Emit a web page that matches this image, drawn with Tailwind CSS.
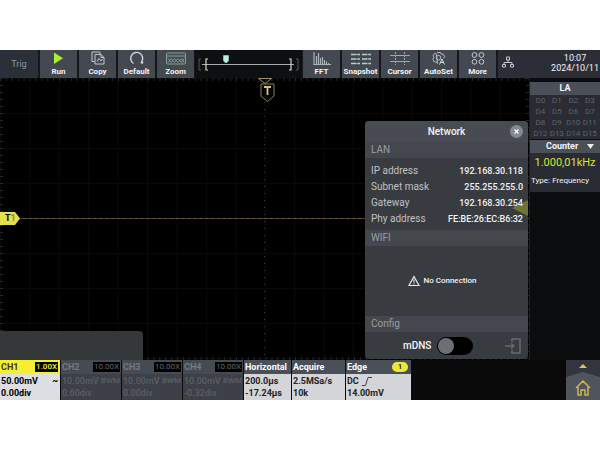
<!DOCTYPE html>
<html lang="en">
<head>
  <meta charset="utf-8">
  <meta name="viewport" content="width=device-width, initial-scale=1">
  <title>Oscilloscope</title>
  <script src="https://cdn.jsdelivr.net/npm/@tailwindcss/browser@4"></script>
</head>
<body class="min-h-screen bg-white flex flex-col justify-center font-['Roboto',sans-serif] text-[9px] leading-3 text-gray-100">
  <main class="w-full bg-black overflow-hidden">

    <!-- toolbar -->
    <header class="h-7 grid grid-cols-[39fr_39fr_39fr_39fr_39fr_107fr_39fr_39fr_39fr_39fr_39fr_103fr] bg-[#15171a] text-[8px] leading-[9px] font-bold">
      <button class="mr-px bg-[#2b2f37] text-[9px] font-normal text-[#8b9a98]">Trig</button>
      <button class="mx-px bg-[#434851] flex flex-col items-center pt-px">
        <svg class="w-4 h-4" viewBox="0 0 16 16"><path d="M3 1.500 L12 7.200 L3 13 Z" fill="#a8f02c"/></svg>
        Run
      </button>
      <button class="mx-px bg-[#434851] flex flex-col items-center pt-px">
        <svg class="w-4 h-4" viewBox="0 0 16 16" fill="none" stroke="#c3c8cb" stroke-width="1"><path d="M4.500 10.500H2V1h8v2"/><path d="M5 3.500h6l3 3v6.500H5z"/><path d="M11 3.500v3h3M7 10.500l2-3 2 2.500 1.500-2"/></svg>
        Copy
      </button>
      <button class="mx-px bg-[#434851] flex flex-col items-center pt-px">
        <svg class="w-4 h-4" viewBox="0 0 16 16" fill="none" stroke="#d5d8da" stroke-width="1.400"><path d="M4.500 12.500A6 6 0 1 1 12.500 11"/><circle cx="13" cy="11.500" r="1.300" fill="#d5d8da" stroke="none"/></svg>
        Default
      </button>
      <button class="mx-px bg-[#434851] flex flex-col items-center pt-px">
        <svg class="w-5 h-4" viewBox="0 0 20 16" fill="none" stroke="#84a397" stroke-width="1"><rect x=".5" y="2" width="19" height="11" rx="1"/><path d="M1 5h18"/><path d="M2 7.500l3 4 3.500-4 3.500 4 3.500-4 2.500 4M2 11.500l3-4 3.500 4 3.500-4 3.500 4 2.500-4" stroke-width=".9"/></svg>
        Zoom
      </button>
      <div class="bg-[#0e0f10] px-[3px]">
        <svg class="w-full h-7" viewBox="0 0 101 28" fill="none" stroke="#a9adad"><path d="M3 9H1v11h2M98 9h2v11h-2" stroke="#55585a"/><path d="M4 14.500h92"/><path d="M10 9H8v11h2M91 9h2v11h-2" stroke="#d0d3d3" stroke-width="1.200"/><path d="M25.500 5.500h5v5l-1.500 2h-2l-1.500-2z" fill="#b9eee2" stroke="#b9eee2" stroke-width=".5"/></svg>
      </div>
      <button class="mx-px bg-[#434851] flex flex-col items-center pt-px">
        <svg class="w-5 h-4" viewBox="0 0 20 16" fill="none" stroke="#aab3b5" stroke-width="1.200"><path d="M2 1v12.500h17"/><path d="M4.500 13V5M6.500 13V2M8.500 13V7M10.500 13V6M12.500 13V9M14.500 13v-2.500M16.500 13v-1"/></svg>
        FFT
      </button>
      <button class="mx-px bg-[#434851] flex flex-col items-center pt-px">
        <svg class="w-5 h-4" viewBox="0 0 20 16" fill="none" stroke="#b5cfc9" stroke-width="1.300"><path d="M0 3.500h9M11 3.500h9M0 8h9M11 8h9M0 12.500h9M11 12.500h9" stroke-dasharray="5.500 .7"/></svg>
        Snapshot
      </button>
      <button class="mx-px bg-[#434851] flex flex-col items-center pt-px">
        <svg class="w-5 h-4" viewBox="0 0 20 16" fill="none" stroke="#8db0a2"><path d="M0 4.500h20M0 10.500h20"/><path d="M5.500 1v13M14.500 1v13" stroke-dasharray="2 1"/></svg>
        Cursor
      </button>
      <button class="mx-px bg-[#434851] flex flex-col items-center pt-px">
        <svg class="w-4 h-4" viewBox="0 0 16 16" fill="none" stroke="#b4bfc1"><path d="M6 1.500h3.500l.7 1.700 1.900-.2 1.500 2.700-1.100 1.600M6.500 12.500l-.9-1.600-2.200.2-1.700-2.800 1.300-1.700L2 4.800l1.500-2.300 1.900.4z"/><circle cx="7.500" cy="6.700" r="2.300"/><path d="M8.500 13.500l2.500-5.500 2.500 5.500M9.500 11.500h3" stroke="#c9e6df"/></svg>
        AutoSet
      </button>
      <button class="mx-px bg-[#434851] flex flex-col items-center pt-px">
        <svg class="w-4 h-4" viewBox="0 0 16 16" fill="none" stroke="#c3c8ca"><circle cx="4.500" cy="4" r="2.400"/><circle cx="11.500" cy="4" r="2.400"/><circle cx="4.500" cy="10.800" r="2.400"/><circle cx="11.500" cy="10.800" r="2.400"/></svg>
        More
      </button>
      <div class="ml-px pl-1 pr-px bg-[#2b2e36] flex items-start justify-between font-normal text-[9px] leading-[10px]">
        <svg class="w-3 h-3 mt-[6px]" viewBox="0 0 12 12" fill="none" stroke="#c3c8ca"><path d="M4.500 1h3v3h-3zM.5 8.500h3v2.500h-3zM8.500 8.500h3v2.500h-3zM6 4v2.500M2 8.500v-2h8v2"/></svg>
        <div class="flex flex-col items-center pt-[3px]"><span>10:07</span><span>2024/10/11</span></div>
      </div>
    </header>

    <div class="relative flex h-[282px]">
      <!-- waveform area -->
      <section class="relative flex-1 min-w-0">
        <svg class="w-full h-full" viewBox="0 0 529 282" preserveAspectRatio="none" fill="none">
          <defs>
            <pattern id="grid" width="29.400" height="35" patternUnits="userSpaceOnUse"><path d="M.5 0v35M0 .5h29.400" stroke="#080909"/></pattern>
          </defs>
          <rect width="529" height="282" fill="url(#grid)"/>
          <path d="M0 1.500h529M0 280.500h529" stroke="#242727" stroke-width="3" stroke-dasharray="1 4.900"/>
          <path d="M1.500 0v282M527.500 0v282" stroke="#242727" stroke-width="3" stroke-dasharray="1 6"/>
          <path d="M264.500 24v258" stroke="#3b3b34" stroke-dasharray="1 6"/>
          <path d="M0 140.500h529" stroke="#4a3e2a"/>
          <path d="M0 140.500h529" stroke="#75623f" stroke-dasharray="2 3.880"/>
        </svg>
        <!-- trigger position -->
        <svg class="absolute left-1/2 -ml-2 top-0 w-5 h-6" viewBox="0 0 20 24" fill="none" stroke="#a28d5c"><path d="M1.500.5h13l-6.500 5z"/><path d="M4 6h13v12l-6.500 5.500L4 18z" stroke="#8a805f"/><path d="M7 9h7M10.500 9v8" stroke="#dcc377" stroke-width="1.800"/></svg>
        <!-- CH1 level -->
        <div class="absolute left-0 top-[134px] w-5 h-[13px] pl-[5px] bg-[#e6df4c] text-[9px] leading-[13px] font-bold text-black [clip-path:polygon(0_0,75%_0,100%_50%,75%_100%,0_100%)]">T<span class="text-[#8f8a30]">1</span></div>
        <div class="absolute left-0 bottom-0 w-[143px] h-[29px] rounded-tr bg-[#35383a]"></div>
      </section>

      <!-- side panel -->
      <aside class="w-[71px] ml-auto pt-1 bg-[#0b0c0d] border-l border-[#1d1f22]">
        <div class="bg-[#292c33]">
          <h2 class="h-[13px] bg-[#4a4f58] text-center leading-[13px] font-bold">LA</h2>
          <div class="grid grid-cols-4 px-[2px] text-center text-[8px] leading-[11px] text-[#5d626a]">
            <span>D0</span><span>D1</span><span>D2</span><span>D3</span>
            <span>D4</span><span>D5</span><span>D6</span><span>D7</span>
            <span>D8</span><span>D9</span><span>D10</span><span>D11</span>
            <span>D12</span><span>D13</span><span>D14</span><span>D15</span>
          </div>
        </div>
        <div class="mt-px bg-[#292c33] pb-1">
          <button class="w-full h-[13px] pl-4 pr-[6px] bg-[#4a4f58] flex items-center justify-between leading-[13px] font-bold">
            Counter
            <svg class="w-[7px] h-[5px]" viewBox="0 0 7 5"><path d="M0 0h7L3.500 5z" fill="#eee"/></svg>
          </button>
          <p class="text-center text-[11px] leading-5 text-[#d9e12f]">1.000,01kHz</p>
          <p class="flex justify-between pl-px pr-[11px] pt-px text-[8px] leading-[14px]"><span>Type:</span><span>Frequency</span></p>
        </div>
      </aside>

      <!-- network dialog -->
      <section role="dialog" aria-labelledby="network-title" class="absolute right-[72px] top-[43px] w-[163px] rounded bg-[#383b40] overflow-hidden text-[10px]">
        <!-- trigger level marker, seen through the dialog -->
        <div class="absolute right-0 top-[79px] w-4 h-4 bg-[#6f7538] [clip-path:polygon(0_50%,100%_0,100%_100%)]"></div>
        <div class="relative h-[21px] bg-[#484c52]">
          <h2 id="network-title" class="text-center leading-[21px] font-medium">Network</h2>
          <button aria-label="Close" class="absolute right-[5px] top-1 w-[13px] h-[13px] rounded-full bg-[#858a92] flex items-center justify-center">
            <svg class="w-[5px] h-[5px]" viewBox="0 0 5 5" stroke="#fff" stroke-width="1.300"><path d="M.5.5l4 4M4.500.5l-4 4"/></svg>
          </button>
        </div>
        <h3 class="h-4 pl-[6px] bg-[#44474e] leading-4 text-[#9a9da1]">LAN</h3>
        <dl class="relative grid grid-cols-[auto_auto] justify-between pl-[6px] pr-[5px] pt-[5px] pb-[3px] leading-4">
          <dt class="text-[#c0c2c4]">IP address</dt><dd class="text-right text-[9px] font-medium">192.168.30.118</dd>
          <dt class="text-[#c0c2c4]">Subnet mask</dt><dd class="text-right text-[9px] font-medium">255.255.255.0</dd>
          <dt class="text-[#c0c2c4]">Gateway</dt><dd class="text-right text-[9px] font-medium">192.168.30.254</dd>
          <dt class="text-[#c0c2c4]">Phy address</dt><dd class="text-right text-[9px] font-medium">FE:BE:26:EC:B6:32</dd>
        </dl>
        <h3 class="h-4 pl-[6px] bg-[#44474e] leading-4 text-[#9a9da1]">WIFI</h3>
        <div class="h-[70px] flex items-center justify-center gap-[3px] pr-2 text-[8px] font-medium">
          <svg class="w-3 h-3" viewBox="0 0 12 12" fill="none" stroke="#e8e8e8" stroke-width="1.200"><path d="M6 1.500l5 9H1zM6 4.500v3M6 8.500v1"/></svg>
          No Connection
        </div>
        <h3 class="h-4 pl-[6px] bg-[#44474e] leading-4 text-[#9a9da1]">Config</h3>
        <div class="h-[27px] flex items-center pl-[38px] pr-[7px]">
          <label for="mdns" class="font-medium mr-[6px]">mDNS</label>
          <input id="mdns" type="checkbox" class="appearance-none w-9 h-[18px] rounded-full bg-black before:block before:w-4 before:h-4 before:m-px before:rounded-full before:bg-[#6b6e74] checked:before:ml-[19px]">
          <button aria-label="Apply" class="ml-auto">
            <svg class="w-4 h-4" viewBox="0 0 16 16" fill="none" stroke="#66696d" stroke-width="1.500"><path d="M7 4V1h8v14H7v-3M0 8h8M6 5.500L9 8l-3 2.500"/></svg>
          </button>
        </div>
      </section>
    </div>

    <!-- channel bar -->
    <footer class="h-10 grid grid-cols-[61fr_61fr_61fr_61fr_48fr_54fr_66fr_154fr_34fr] bg-[#0a0a0b] font-bold whitespace-nowrap">
      <div class="mr-px bg-[#dcdee2] text-black">
        <div class="h-[14px] pl-px pr-[2px] bg-[#f5ee33] text-[#3a3a10] flex items-center justify-between">CH1 <span class="px-px bg-black text-[8px] leading-[10px] font-medium text-[#f5ee33]">1.00X</span></div>
        <div class="pl-px pr-[2px] pt-px flex justify-between"><span>50.00mV</span><span>~</span></div>
        <div class="pl-px">0.00div</div>
      </div>
      <div class="mr-px bg-[#3d4047] text-[#5b5f66]">
        <div class="h-[14px] pl-px pr-px bg-[#464b53] text-[#747a82] flex items-center justify-between">CH2 <span class="px-px bg-black text-[8px] leading-[10px] font-normal text-[#62666c]">10.00X</span></div>
        <div class="pl-px pr-px pt-px font-medium flex justify-between"><span>10.00mV</span><span class="text-[8px]">BWM</span></div>
        <div class="pl-px font-medium">0.60div</div>
      </div>
      <div class="mr-px bg-[#3d4047] text-[#5b5f66]">
        <div class="h-[14px] pl-px pr-px bg-[#464b53] text-[#747a82] flex items-center justify-between">CH3 <span class="px-px bg-black text-[8px] leading-[10px] font-normal text-[#62666c]">10.00X</span></div>
        <div class="pl-px pr-px pt-px font-medium flex justify-between"><span>10.00mV</span><span class="text-[8px]">BWM</span></div>
        <div class="pl-px font-medium">0.00div</div>
      </div>
      <div class="mr-px bg-[#3d4047] text-[#5b5f66]">
        <div class="h-[14px] pl-px pr-px bg-[#464b53] text-[#747a82] flex items-center justify-between">CH4 <span class="px-px bg-black text-[8px] leading-[10px] font-normal text-[#62666c]">10.00X</span></div>
        <div class="pl-px pr-px pt-px font-medium flex justify-between"><span>10.00mV</span><span class="text-[8px]">BWM</span></div>
        <div class="pl-px font-medium">-0.32div</div>
      </div>
      <div class="mr-px bg-[#d3d5d8] text-[#222]">
        <div class="h-[14px] pl-px bg-[#4a4f58] text-white leading-[14px]">Horizontal</div>
        <div class="pl-px pt-px">200.0µs</div>
        <div class="pl-px">-17.24µs</div>
      </div>
      <div class="mr-px bg-[#d3d5d8] text-[#222]">
        <div class="h-[14px] pl-px bg-[#4a4f58] text-white leading-[14px]">Acquire</div>
        <div class="pl-px pt-px">2.5MSa/s</div>
        <div class="pl-px">10k</div>
      </div>
      <div class="mr-px bg-[#d3d5d8] text-[#222]">
        <div class="h-[14px] pl-px pr-[3px] bg-[#4a4f58] text-white flex items-center justify-between">Edge <span class="w-4 rounded-full bg-[#ece936] text-center text-[8px] leading-[10px] text-[#333]">1</span></div>
        <div class="pl-px pt-px flex items-center gap-[3px]">DC
          <svg class="w-[10px] h-[9px]" viewBox="0 0 10 9" fill="none" stroke="#444"><path d="M0 8.500h3.500l2.500-8h4"/></svg>
        </div>
        <div class="pl-px">14.00mV</div>
      </div>
      <div></div>
      <button aria-label="Home" class="bg-[#33363f]">
        <svg class="w-full h-10" viewBox="0 0 34 40" fill="none"><path d="M0 17l17-5 17 5v23H0z" fill="#50545c"/><path d="M13 8l4-4 4 4z" fill="#d9c84f"/><path d="M10 28l7-7 7 7M12 27v8h3v-5h4v5h3v-8" stroke="#c9b854" stroke-width="1.500"/></svg>
      </button>
    </footer>
  </main>
</body>
</html>
